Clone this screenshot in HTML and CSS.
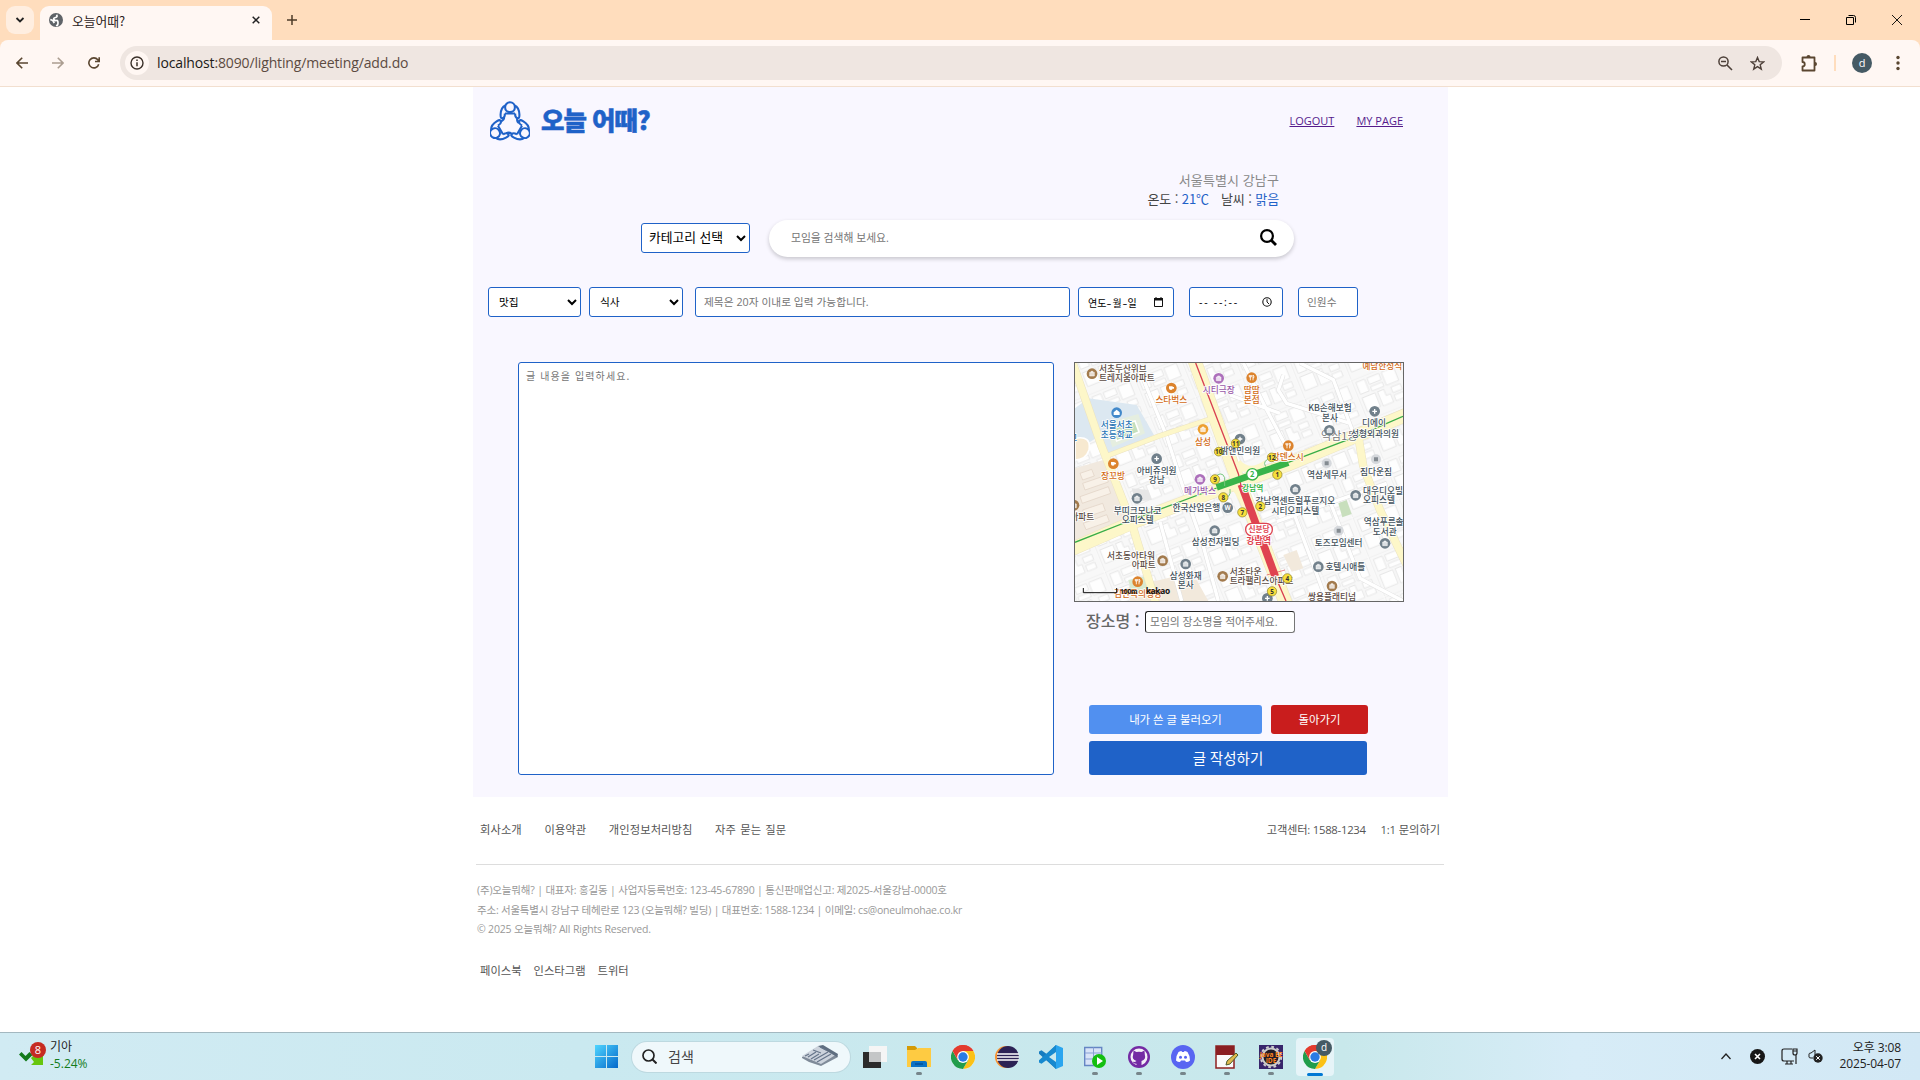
FILE: index.html
```html
<!DOCTYPE html>
<html lang="ko">
<head>
<meta charset="utf-8">
<title>오늘어때?</title>
<link rel="stylesheet" href="styles.css">
</head>
<body>
<svg class="defs" width="0" height="0">
  <defs>
    <symbol id="chrome" viewBox="0 0 24 24">
      <circle cx="12" cy="12" r="12" fill="#fff"/>
      <path d="M12 12 1.6 6A12 12 0 0 1 22.4 6H12z" fill="#e33b2e"/>
      <path d="M22.4 6A12 12 0 0 1 12 24l5.2-9L12 6z" fill="#fbc116"/>
      <path d="M1.6 6A12 12 0 0 0 12 24l5.2-9H6.8z" fill="#219d4b"/>
      <path d="M1.6 6A12 12 0 0 1 22.4 6H12L6.8 15z" fill="#e33b2e"/>
      <circle cx="12" cy="12" r="5.9" fill="#fff"/><circle cx="12" cy="12" r="4.7" fill="#2a7be4"/>
    </symbol>
  </defs>
</svg>

<header class="tabstrip">
  <span class="tab-search"><svg width="10" height="10" viewBox="0 0 10 10"><path d="M1.5 3 5 6.5 8.500 3" fill="none" stroke="#222" stroke-width="1.8"/></svg></span>
  <div class="tab">
    <svg width="14" height="14" viewBox="0 0 14 14"><circle cx="7" cy="7" r="7" fill="#5f6368"/><path d="M7.500 1.800Q9 4 6.500 4.500T5 6.500t2.500 1T9 10t-2 2.300M1.300 6.500l2.500 1 1.500 2.500" stroke="#fff" stroke-width="1.700" fill="none"/></svg>
    <span class="tab-title">오늘어때?</span>
    <svg class="tab-x" width="8" height="8" viewBox="0 0 8 8"><path d="M.7.7l6.600 6.600M7.300.7L.7 7.300" stroke="#222" stroke-width="1.500"/></svg>
  </div>
  <svg class="new-tab" width="10" height="10" viewBox="0 0 10 10"><path d="M5 0v10M0 5h10" stroke="#4e3b28" stroke-width="1.500"/></svg>
  <div class="window-buttons">
    <svg width="10" height="10" viewBox="0 0 10 10"><path d="M0 4.500h10" stroke="#000"/></svg>
    <svg width="10" height="10" viewBox="0 0 10 10"><path d="M.5 2.500h7v7h-7zM2.500.5h5q2 0 2 2v5" fill="none" stroke="#000"/></svg>
    <svg width="10" height="10" viewBox="0 0 10 10"><path d="M0 0l10 10M10 0L0 10" stroke="#000" stroke-width=".9"/></svg>
  </div>
</header>

<div class="toolbar-back">
<nav class="toolbar">
  <svg class="nav-icon" width="12" height="12" viewBox="0 0 12 12"><path d="M12 6H1M6.200.8 1 6l5.200 5.200" fill="none" stroke="#5a4630" stroke-width="1.600"/></svg>
  <svg class="nav-icon faded" width="12" height="12" viewBox="0 0 12 12"><path d="M0 6h11M5.800.8 11 6l-5.200 5.200" fill="none" stroke="#5a4630" stroke-width="1.600"/></svg>
  <svg class="nav-icon" width="12" height="12" viewBox="0 0 12 12"><path d="M10.700 7.200A5 5 0 1 1 9.800 2.800L11 4.200M11.200.3v4.200H7" fill="none" stroke="#5a4630" stroke-width="1.600"/></svg>
  <div class="address">
    <span class="site-info"><svg width="14" height="14" viewBox="0 0 14 14"><circle cx="7" cy="7" r="6" fill="none" stroke="#3a3029" stroke-width="1.400"/><path d="M7 6.200v4M7 3.500v1.500" stroke="#3a3029" stroke-width="1.500"/></svg></span>
    <span class="url"><b>localhost</b>:8090/lighting/meeting/add.do</span>
    <svg class="zoom-icon" width="15" height="15" viewBox="0 0 15 15"><path d="M9 9l5 5M3 5.500h5" stroke="#4d4039" stroke-width="1.600"/><circle cx="5.500" cy="5.500" r="4.600" fill="none" stroke="#4d4039" stroke-width="1.500"/></svg>
    <svg width="15" height="15" viewBox="0 0 15 15"><path d="M7.500 1.500l1.700 4.100 4.500.3-3.500 2.900 1.100 4.300-3.800-2.400-3.800 2.400 1.100-4.300L1.300 5.900l4.500-.3z" fill="none" stroke="#4d4039" stroke-width="1.400"/></svg>
  </div>
  <svg class="extensions" width="17" height="17" viewBox="0 0 17 17"><path d="M1.500 2.500h12v13h-12v-4c3 0 3-4.500 0-4.500z" fill="none" stroke="#5a4630" stroke-width="1.800" stroke-linejoin="round"/><path d="M5.500 2a2 2 0 0 1 4 0zM14 7v4a2 2 0 0 0 0-4z" fill="#5a4630"/></svg>
  <span class="toolbar-divider"></span>
  <span class="avatar">d</span>
  <svg class="kebab" width="4" height="16" viewBox="0 0 4 16"><g fill="#5a4630"><circle cx="2" cy="2.500" r="1.700"/><circle cx="2" cy="8" r="1.700"/><circle cx="2" cy="13.500" r="1.700"/></g></svg>
</nav>
</div>

<main class="viewport">
  <div class="container">
    <div class="site-header">
      <svg class="logo" width="40" height="40" viewBox="0 0 40 40" fill="none" stroke="#1f62c8" stroke-width="2.100" stroke-linejoin="round">
        <g id="person"><circle cx="20" cy="6.200" r="4.900"/><path d="M15.500 4.500C11.500 6 10.800 9 10.600 13.500c-.1 3.500.5 4 2.300 3.500 2-.4 2-2 2-4.500M24.500 4.500c4 1.500 4.700 4.500 4.900 9 .1 3.500-.5 4-2.300 3.500-2-.4-2-2-2-4.500M15 12.500h10M14 16c.5 2-1 3.500-3 4.500"/></g>
        <use href="#person" transform="rotate(120 20 23.500)"/>
        <use href="#person" transform="rotate(240 20 23.500)"/>
      </svg>
      <h1 class="brand">오늘 어때?</h1>
      <a class="top-link" href="#">LOGOUT</a>
      <a class="top-link" href="#">MY PAGE</a>
    </div>

    <div class="weather">
      <div class="region">서울특별시 강남구</div>
      <div class="now"><span>온도 : <em>21℃</em></span><span>날씨 : <em>맑음</em></span></div>
    </div>

    <div class="search-row">
      <select class="field category"><option>카테고리 선택</option></select>
      <div class="search-box">
        <input class="search-input" placeholder="모임을 검색해 보세요.">
        <svg width="17" height="17" viewBox="0 0 17 17"><circle cx="7" cy="7" r="5.900" fill="none" stroke="#000" stroke-width="2.200"/><path d="M11 11l5 5" stroke="#000" stroke-width="2.800"/></svg>
      </div>
    </div>

    <div class="form-row">
      <select class="field main-cat"><option>맛집</option></select>
      <select class="field sub-cat"><option>식사</option></select>
      <input class="field title-input" placeholder="제목은 20자 이내로 입력 가능합니다.">
      <div class="field date-input"><span>연도<i>-</i>월<i>-</i>일</span><svg width="9" height="10" viewBox="0 0 9 10"><path d="M.5 1.500h8v8h-8z" fill="none" stroke="#111"/><path d="M0 1h9v2.500H0zM1.500 0h1v1h-1zM6.500 0h1v1h-1z" fill="#111"/></svg></div>
      <div class="field time-input"><span>-- --:--</span><svg width="10" height="10" viewBox="0 0 10 10"><circle cx="5" cy="5" r="4.200" fill="none" stroke="#111" stroke-width="1.100"/><path d="M5 2.200V5l2 2" fill="none" stroke="#111"/></svg></div>
      <input class="field people-input" placeholder="인원수">
    </div>

    <div class="body-row">
      <textarea class="field content-input" placeholder="글 내용을 입력하세요."></textarea>
      <aside class="side">
        <div class="map">
          <svg width="328" height="238" viewBox="15 24 984 714" preserveAspectRatio="none">
            <defs>
              <pattern id="blocks" width="150" height="128" patternUnits="userSpaceOnUse" patternTransform="rotate(-22)">
                <path d="M0 0h150v128H0z" fill="#f8f8f8"/>
                <g fill="#fefefe" stroke="#e4e4e4" stroke-width="2.500"><path d="M14 14h28v38H14zM50 14h38v20H50zM96 14h40v42H96zM50 42h38v14H50zM14 64h42v44H14zM64 64h20v20h14v26H64zM106 66h30v18h-30zM106 92h30v18h-30z"/></g>
                <path d="M0 0h150M0 0v128" stroke="#e0e0e0" stroke-width="8"/><path d="M0 0h150M0 0v128" stroke="#fff" stroke-width="5"/>
              </pattern>
              <g id="dot-shop"><circle r="16"/><path d="M-7-4h14v11H-7zM-3-4v-3h6v3" fill="#fff" stroke="#fff" stroke-width="1.500" fill-opacity=".75"/></g>
              <g id="dot-food"><circle r="16"/><path d="M-4-8v16M-7-8v6h6v-6M4 8V-8q4 3 2 9H4" stroke="#fff" stroke-width="2.500" fill="none"/></g>
              <g id="dot-med"><circle r="16"/><path d="M0-7V7M-7 0H7" stroke="#fff" stroke-width="4"/></g>
              <g id="dot-cup"><circle r="16"/><path d="M-7-5H4v6q0 5-5 5-6 0-6-5zM4-3h4v5H4" fill="#fff"/></g>
            </defs>
            <path d="M15 24h984v714H15z" fill="url(#blocks)"/>
            <path d="M15 160 55 130l145 20 52 90-135 60-40-50-62 40z" fill="#dce8f1"/>
            <path d="M105 205l100-28 20 58-98 42z" fill="#e5eee0"/><path d="M125 218l70-20 12 33-67 27z" fill="#c4dfbd" stroke="#fff" stroke-width="5"/>
            <path d="M15 250q50-10 42 35-10 30-42 30z" fill="#f7e9d0" stroke="#fff" stroke-width="5"/>
            <path d="M15 340l85-25 72 185-157 60z" fill="#f1e9df"/><g stroke="#dfd0c2" stroke-width="2" fill="#f8f1e8"><path d="M30 355l35-12 8 20-35 12zM38 385l70-24 7 20-70 24zM30 425l85-30 7 20-85 30zM38 465l60-20 8 22-60 20zM40 505l70-26 8 20-70 25z"/></g>
            <path d="M165 700l145-35 70 10 35 63H180zM640 600l40-15 20 55-35 10z" fill="#f2e9dc"/>
            <path d="M175 675l65-15 20 40-75 15z" fill="#d8ead0"/>
            <path d="M805 445l25-10 15 42-28 10z" fill="#c8dfbd"/>
            <path d="M185 400l50 5 10 30-50 5z" fill="#e6e6e6"/>
            <g fill="none" stroke="#e0e0e0" stroke-width="13"><path d="M200 24l90 220 45 140 65 190 45 164M640 60l-15 45 25 40 190 60M480 120l150 55M270 500l65 238M520 24l70 140 90 170M690 24l100 50 60 160M620 500l70-25 260-90M670 470l100 268M780 440l90 230 129 68"/></g>
            <g fill="none" stroke="#fff" stroke-width="10"><path d="M200 24l90 220 45 140 65 190 45 164M640 60l-15 45 25 40 190 60M480 120l150 55M270 500l65 238M520 24l70 140 90 170M690 24l100 50 60 160M620 500l70-25 260-90M670 470l100 268M780 440l90 230 129 68"/></g>
            <g fill="none" stroke="#ebe3c2" stroke-width="2" stroke-linejoin="round">
              <g stroke-width="25"><path d="M8 24l87 250 90 230 75 250M865 245l15 90 50 130 80 165"/></g><path d="M102 306l163-62 155-52" stroke-width="16"/>
              <path d="M372 12l118 328 60 150 100 262M5 582l195-85 250-95 200-72 210-88 150-63" stroke-width="42"/>
            </g>
            <g fill="none" stroke="#fdf7c9" stroke-linejoin="round">
              <g stroke-width="22"><path d="M8 24l87 250 90 230 75 250M865 245l15 90 50 130 80 165"/></g><path d="M102 306l163-62 155-52" stroke-width="13"/>
              <path d="M372 12l118 328 60 150 100 262M5 582l195-85 250-95 200-72 210-88 150-63" stroke-width="39"/>
            </g>
            <path d="M510 315q30 35 75 0l-10 35h-90zM455 385q35 10 50 50l20-55z" fill="#fdf7c9"/>
            <path d="M15 562l185-73 240-90M655 322l205-78 139-60" fill="none" stroke="#38ad48" stroke-width="4"/>
            <path d="M377 24l128 332 8 35M612 655l36 83" fill="none" stroke="#d94051" stroke-width="4"/>
            <path d="M514 388l102 277" stroke="#df4350" stroke-width="23"/><path d="M440 397l100-35 115-39" fill="none" stroke="#38b44a" stroke-width="20"/>
            <path d="M427 373q28-30 37-5v25M455 427q30 5 25-25M605 310q-30 5-18 25" fill="none" stroke="#78c77f" stroke-width="3"/><path d="M590 660l55-15" stroke="#df4350" stroke-width="2"/>

            <g class="poi" text-anchor="middle">
              <text x="808" y="256" class="district">역삼1동</text>
              <g fill="#5b4b43" text-anchor="start"><text x="87" y="50">서초두산위브</text><text x="87" y="79">트레지움아파트</text><text x="479" y="659">서초타운</text><text x="479" y="687">트라팰리스아파트</text></g>
              <g fill="#5b4b43"><text x="183" y="611">서초동아타워</text><text x="221" y="638">아파트</text><text x="37" y="495">아파트</text><text x="786" y="735">쌍용플래티넘</text></g>
              <g fill="#d36b16"><text x="304" y="145">스타벅스</text><text x="545" y="115">땀땀</text><text x="545" y="143">본점</text><text x="399" y="269">삼성</text><text x="129" y="371">장꼬방</text><text x="653" y="315">강덴스시</text><text x="937" y="41">예남한정식</text><text x="204" y="725">김만득의행당</text></g>
              <g fill="#9859a8"><text x="446" y="115">시티극장</text><text x="390" y="418">메가박스</text></g>
              <g fill="#2775b5"><text x="140" y="220">서울서초</text><text x="140" y="249">초등학교</text><text x="10" y="257">고</text></g>
              <g fill="#42515b"><text x="780" y="167">KB손해보험</text><text x="780" y="198">본사</text><text x="912" y="213">디에이</text><text x="915" y="245">성형외과의원</text><text x="511" y="298">밝앤민의원</text><text x="260" y="357">아비쥬의원</text><text x="260" y="385">강남</text><text x="771" y="368">역삼세무서</text><text x="918" y="361">짐다운짐</text><text x="939" y="417">대우디오빌</text><text x="927" y="445">오피스텔</text><text x="676" y="447">강남역센트럴푸르지오</text><text x="676" y="476">시티오피스텔</text><text x="203" y="476">부띠크모나코</text><text x="203" y="503">오피스텔</text><text x="379" y="467">한국산업은행</text><text x="437" y="571">삼성전자빌딩</text><text x="347" y="671">삼성화재</text><text x="347" y="700">본사</text><text x="941" y="510">역삼푸른솔</text><text x="944" y="539">도서관</text><text x="806" y="574">토즈모임센터</text><text x="826" y="645">호텔시애틀</text></g>
            </g>
            <g fill="#a27a4d"><use href="#dot-shop" x="66" y="56"/><use href="#dot-shop" x="278" y="617"/><use href="#dot-shop" x="458" y="664"/><use href="#dot-shop" x="786" y="693"/><use href="#dot-shop" x="12" y="451"/></g>
            <g fill="#dc832d"><use href="#dot-cup" x="304" y="99"/><use href="#dot-food" x="545" y="68"/><use href="#dot-cup" x="130" y="326"/><use href="#dot-food" x="655" y="272"/><use href="#dot-food" x="203" y="680"/></g>
            <use href="#dot-shop" x="399" y="223" fill="#eda030"/>
            <g fill="#ad70bb"><use href="#dot-shop" x="446" y="70"/><use href="#dot-shop" x="390" y="373"/></g>
            <g fill="#4389ca"><circle cx="140" cy="173" r="16"/><path d="M131 180v-8l9-8 9 8v8z" fill="#fff"/></g>
            <g fill="#71808b"><use href="#dot-med" x="260" y="311"/><use href="#dot-med" x="914" y="169"/><use href="#dot-med" x="510" y="252"/><use href="#dot-shop" x="778" y="226"/><use href="#dot-shop" x="201" y="430"/><use href="#dot-shop" x="676" y="403"/><use href="#dot-shop" x="857" y="421"/><use href="#dot-shop" x="434" y="527"/><use href="#dot-shop" x="347" y="627"/><use href="#dot-shop" x="945" y="565"/><use href="#dot-shop" x="745" y="635"/><use href="#dot-med" x="592" y="730"/><circle cx="473" cy="458" r="16"/></g>
            <text x="473" y="465" class="mark">W</text>
            <g fill="#d5d8dc"><circle cx="770" cy="325" r="15"/><circle cx="918" cy="313" r="15"/><circle cx="806" cy="527" r="15"/></g><path d="M764 319h12v12h-12zM912 307h12v12h-12zM800 521h12v12h-12z" fill="#848b91"/>
            <g class="exit"><circle cx="497" cy="265" r="13"/><circle cx="446" cy="290" r="13"/><circle cx="605" cy="307" r="13"/><circle cx="622" cy="359" r="14"/><circle cx="435" cy="373" r="14"/><circle cx="460" cy="427" r="14"/><circle cx="571" cy="454" r="14"/><circle cx="517" cy="472" r="14"/><circle cx="652" cy="670" r="14"/><circle cx="606" cy="709" r="14"/></g>
            <g class="exit-no"><text x="497" y="272">11</text><text x="446" y="297">10</text><text x="605" y="314">12</text><text x="622" y="366">1</text><text x="435" y="380">9</text><text x="460" y="434">8</text><text x="571" y="461">2</text><text x="517" y="479">7</text><text x="652" y="677">4</text><text x="606" y="716">5</text></g>
            <circle cx="547" cy="358" r="17" fill="#fff" stroke="#38b44a" stroke-width="4"/><text x="547" y="367" class="station line2">2</text>
            <text x="548" y="407" class="station line2 halo">강남역</text>
            <rect x="527" y="505" width="80" height="37" rx="18" fill="#fff" stroke="#df4350" stroke-width="4"/><text x="567" y="532" class="station shin">신분당</text>
            <text x="566" y="568" class="station shin halo big">강남역</text>
            <path d="M40 699v14h100v-14" fill="none" stroke="#111" stroke-width="3"/><text x="150" y="717" class="scale">100m</text><text x="227" y="716" class="scale kakao">kakao</text>
          </svg>
        </div>
        <div class="place-row"><label class="place-label">장소명 :</label><input class="place-input" placeholder="모임의 장소명을 적어주세요."></div>
        <div class="actions">
          <button class="btn load">내가 쓴 글 불러오기</button><button class="btn back">돌아가기</button>
        </div>
        <button class="btn submit">글 작성하기</button>
      </aside>
    </div>
  </div>

  <footer class="footer">
    <div class="footer-top">
      <span>회사소개</span><span>이용약관</span><span>개인정보처리방침</span><span class="faq">자주 묻는 질문</span>
      <span class="support">고객센터: 1588-1234</span><span class="inquiry">1:1 문의하기</span>
    </div>
    <div class="company">
      <p class="c1">(주)오늘뭐해? | 대표자: 홍길동 | 사업자등록번호: 123-45-67890 | 통신판매업신고: 제2025-서울강남-0000호</p>
      <p class="c2">주소: 서울특별시 강남구 테헤란로 123 (오늘뭐해? 빌딩) | 대표번호: 1588-1234 | 이메일: cs@oneulmohae.co.kr</p>
      <p class="c3">© 2025 오늘뭐해? All Rights Reserved.</p>
    </div>
    <div class="social"><span>페이스북</span><span>인스타그램</span><span>트위터</span></div>
  </footer>
</main>

<div class="taskbar">
  <div class="widget">
    <svg width="27" height="26" viewBox="0 0 27 26"><path d="M0 12.500 2.500 10l4 4 4-4 3 3-6.500 6.500z" fill="#127a1b"/><path d="M12 16l3-3h9v10H12l3-3z" fill="#66c60e"/><circle cx="19" cy="8" r="8" fill="#c62b22"/><text x="19" y="12" class="badge">8</text></svg>
    <div class="stock"><span>기아</span><span class="down">-5.24%</span></div>
  </div>
  <div class="apps">
    <span class="app"><svg width="23" height="23" viewBox="0 0 23 23"><defs><linearGradient id="win" gradientUnits="userSpaceOnUse" x1="0" y1="0" x2="23" y2="23"><stop stop-color="#4fd5ff"/><stop offset="1" stop-color="#0468ca"/></linearGradient></defs><path d="M0 0h11v11H0zM12 0h11v11H12zM0 12h11v11H0zM12 12h11v11H12z" fill="url(#win)"/></svg></span>
    <div class="task-search">
      <svg width="15" height="15" viewBox="0 0 15 15"><circle cx="6.500" cy="6.500" r="5.500" fill="none" stroke="#222" stroke-width="1.700"/><path d="M10.500 10.500l4 4" stroke="#222" stroke-width="2"/></svg>
      <span>검색</span>
      <svg class="news" width="38" height="22" viewBox="0 0 38 22"><path d="M1 12 18 1l5 2 13 6 1 3-17 9-12-4-7-4z" fill="#7f8b99"/><path d="M1 11 17 1l19 8-16 10z" fill="#ccd3dc"/><path d="M17 1l5-1 15 9-1 3z" fill="#5f6e80"/><path d="M4 11l4-2M7 12l8-5M10 14l8-5M13 15l14-8M16 17l14-8M12 5l8 3M19 2l6 3" stroke="#66758a" stroke-width="1.200"/></svg>
    </div>
    <span class="app"><svg width="24" height="22" viewBox="0 0 24 22"><path d="M0 6h18v16H0z" fill="#2b2b2b"/><path d="M6 0h18v16H6z" fill="#f5f5f5"/><path d="M6 6h12v10H6z" fill="#c4c6c7"/></svg></span>
    <span class="app run"><svg width="24" height="22" viewBox="0 0 24 22"><path d="M0 0h8l2 2v6H0z" fill="#d59a05"/><path d="M0 4h8l3-2h13v19H0z" fill="#fecb42"/><path d="M4 21v-4q0-2 2-2h12q2 0 2 2v4z" fill="#0b72c4"/><path d="M8 18h8" stroke="#055199" stroke-width="1.500"/></svg></span>
    <span class="app"><svg width="24" height="24"><use href="#chrome"/></svg></span>
    <span class="app"><svg width="24" height="22" viewBox="0 0 24 22"><circle cx="11" cy="11" r="11" fill="#f79332"/><circle cx="13" cy="11" r="11" fill="#2c2255"/><path d="M2 8h22M2 11h22M2 14h22" stroke="#fff" stroke-width="1.700"/></svg></span>
    <span class="app"><svg width="24" height="24" viewBox="0 0 24 24"><path d="M17 0 8 9.300 2.500 5.200 0 6.500v2.200L17 24l1-6z" fill="#167cc0"/><path d="M17 24 8 14.700l-5.500 4.100L0 17.500v-2.200L17 0l1 6z" fill="#1789cf"/><path d="M17 0l7 3v18l-7 3z" fill="#2aa5ef"/><path d="M17 7v10l-7-5z" fill="#c9e8ed"/></svg></span>
    <span class="app run"><svg width="22" height="22" viewBox="0 0 22 22"><path d="M.7 1.500h17v18H.7z" fill="#d8e3f7" stroke="#6686c4" stroke-width="1.400"/><path d="M1 7h17M1 13h17M9.500 1.500v18" stroke="#87a1d5"/><circle cx="15" cy="15" r="7" fill="#13bf10"/><path d="M13 11l6 4-6 4z" fill="#fff"/></svg></span>
    <span class="app run"><svg width="22" height="22" viewBox="0 0 22 22"><circle cx="11" cy="11" r="11" fill="#742aa4"/><circle cx="11" cy="11" r="8.500" fill="#f4eff8"/><path d="M5.500 4.500 8.500 6q2.500-.7 5 0l3-1.500.3 4q1.500 5-3.300 6.500v5h-5v-2.300q-3 .3-4-2.200 2 1 4-.5-5-1.500-3.300-6.500z" fill="#742aa4"/></svg></span>
    <span class="app run"><svg width="24" height="24" viewBox="0 0 24 24"><circle cx="12" cy="12" r="12" fill="#5865f2"/><path d="M5 15.500q0-5 2.500-8.500 2-1 3-1l.5 1h2l.5-1q1 0 3 1 2.500 3.500 2.500 8.500-1.500 1.500-4 1.500l-1-1.500h-4L9 17q-2.500 0-4-1.500z" fill="#fff"/><circle cx="9.500" cy="12.300" r="1.500" fill="#5865f2"/><circle cx="14.500" cy="12.300" r="1.500" fill="#5865f2"/></svg></span>
    <span class="app run"><svg width="24" height="24" viewBox="0 0 24 24"><path d="M1 1h18v22H1z" fill="#fafafa" stroke="#8f2020" stroke-width="1.500"/><path d="M1 1h18v9H1z" fill="#8b1f22"/><path d="M11 20l1-4 9-8 2 2-8 9z" fill="#e0b94c" stroke="#4d5c2b"/></svg></span>
    <span class="app run"><svg width="24" height="24" viewBox="0 0 24 24"><path d="M0 0h24v24H0z" fill="#38256b"/><circle cx="12" cy="12" r="8.500" fill="#211b27" stroke="#ccc" stroke-width="2"/><circle cx="12" cy="12" r="10.200" fill="none" stroke="#ccc" stroke-width="2" stroke-dasharray="2.700 2.640"/><text x="12" y="11.500" class="java">Java EE</text><text x="12" y="18" class="java">IDE</text></svg></span>
    <span class="app run active"><svg width="24" height="24"><use href="#chrome"/></svg><i class="profile">d</i></span>
  </div>
  <div class="tray">
    <svg width="10" height="7" viewBox="0 0 10 7"><path d="M.5 6 5 1l4.500 5" fill="none" stroke="#222" stroke-width="1.300"/></svg>
    <svg class="t-x" width="15" height="15" viewBox="0 0 15 15"><circle cx="7.500" cy="7.500" r="7.500" fill="#171717"/><path d="M5 5l5 5M10 5l-5 5" stroke="#fff" stroke-width="1.600"/></svg>
    <svg class="t-pc" width="17" height="17" viewBox="0 0 17 17" fill="none" stroke="#222" stroke-width="1.200"><path d="M11 1H3Q1 1 1 3v8q0 2 2 2h10M4 16h8M6 13v3M10 13v3M15 7v9M12 1h4v4q0 2-2 2t-2-2zM12 3h4"/></svg>
    <svg class="t-vol" width="15" height="14" viewBox="0 0 15 14"><path d="M5 9H3Q1 9 1 8V5q0-1 2-1l4-3v5" fill="none" stroke="#222"/><circle cx="10" cy="9" r="4.700" fill="#222"/><path d="M8.200 7.200l3.600 3.600M11.800 7.200l-3.600 3.600" stroke="#fff"/></svg>
    <div class="clock"><span>오후 3:08</span><span>2025-04-07</span></div>
  </div>
</div>
</body>
</html>
```
FILE: styles.css
```css
* { box-sizing: border-box; }
body {
  margin: 0; width: 1920px; height: 1080px; overflow: hidden;
  display: flex; flex-direction: column; background: #fff;
  font-family: "Open Sans", "Noto Sans CJK KR", sans-serif;
}
svg { display: block; flex: none; }
.defs { position: absolute; }
input, select, textarea, button { font-family: inherit; margin: 0; }

/* browser frame */
.tabstrip { height: 40px; flex: none; display: flex; align-items: center; background: #ffddbd; padding-left: 6px; }
.tab-search { width: 28px; height: 28px; border-radius: 9px; background: #ffeee0; display: flex; align-items: center; justify-content: center; }
.tab { align-self: flex-end; margin-left: 6px; width: 232px; height: 34px; border-radius: 9px 9px 0 0; background: #fff7f3; display: flex; align-items: center; padding: 0 12px 6px 9px; }
.tab-title { margin: 2px 0 0 9px; font: 12.800px/18px "Noto Sans CJK KR", sans-serif; color: #2b211b; }
.tab-x { margin-left: auto; }
.new-tab { margin-left: 15px; }
.window-buttons { margin-left: auto; margin-right: 18px; display: flex; gap: 36px; }
.toolbar-back { background: #ffddbd; flex: none; }
.toolbar { height: 47px; background: #fff7f3; border-bottom: 1px solid #f2dfcf; border-radius: 8px 8px 0 0; display: flex; align-items: center; padding: 0 20px 0 16px; }
.nav-icon { margin-right: 24px; }
.faded { opacity: .5; }
.address { width: 1662px; height: 34px; margin-left: -4px; border-radius: 17px; background: #efe6e1; display: flex; align-items: center; padding: 0 17px 0 5px; }
.site-info { width: 24px; height: 24px; border-radius: 50%; background: #fff7f3; display: flex; align-items: center; justify-content: center; }
.url { margin-left: 8px; font-size: 14px; line-height: 20px; color: #5c4b42; letter-spacing: -.14px; }
.url b { font-weight: 400; color: #201a17; }
.zoom-icon { margin-left: auto; margin-right: 17px; }
.extensions { margin-left: 19px; }
.toolbar-divider { width: 2px; height: 16px; margin: 0 16px 0 16px; background: #ffddbd; }
.avatar { width: 20px; height: 20px; border-radius: 50%; background: #455a64; color: #fff; font-size: 11px; line-height: 19px; text-align: center; }
.kebab { margin-left: 24px; }

/* page */
.viewport { height: 945px; flex: none; }
.container { width: 975px; height: 710px; margin-left: 473px; background: #f9f7ff; }
.site-header { display: flex; align-items: center; height: 67px; padding: 0 45px 0 17px; }
.brand { margin: -4px auto 0 11px; font: 900 25.500px/30px "Noto Sans CJK KR", sans-serif; letter-spacing: -1px; color: #1f62c8; -webkit-text-stroke: .5px #1f62c8; }
.top-link { font-size: 11px; line-height: 16px; color: #551a8b; margin-left: 22px; }
.weather { display: flex; flex-direction: column; align-items: flex-end; padding: 16px 169px 0 0; font: 13px/19px "Noto Sans CJK KR", sans-serif; height: 66px; color: #444; }
.region { color: #888; letter-spacing: .1px; }
.now { display: flex; gap: 12px; letter-spacing: -.1px; }
.now em { font-style: normal; color: #1f62c8; }
.search-row { display: flex; align-items: center; height: 37px; padding-left: 168px; }
.field { border: 1px solid #1f62c8; border-radius: 3px; background: #fff; height: 30px; color: #000; outline: none; flex: none; }
.field::placeholder, .search-input::placeholder, .place-input::placeholder { color: #757575; opacity: 1; }
.category { width: 109px; font-size: 12.800px; padding: 0 3px 2px; margin-top: -1px; }
.search-box { width: 525px; height: 37px; margin-left: 19px; border-radius: 19px; background: #fff; box-shadow: 0 2px 4px rgba(0,0,0,.2); display: flex; align-items: center; padding: 0 17px 0 22px; }
.search-box svg { margin-top: -2px; }
.search-input { border: 0; padding: 0 0 2px; width: 470px; flex: 1; font-size: 10.800px; outline: none; background: none; }
.form-row { display: flex; padding: 30px 0 0 15px; }
.form-row .field { font-size: 10.700px; }
.form-row .main-cat { width: 93px; padding: 0 0 0 6px; }
.form-row .sub-cat { width: 94px; margin-left: 8px; padding: 0 0 0 6px; }
.title-input { width: 375px; margin-left: 12px; padding: 0 8px; letter-spacing: .04px; }
.date-input { width: 96px; margin-left: 8px; padding: 0 10px 0 9px; display: flex; align-items: center; justify-content: space-between; }
.date-input span { font-size: 10px; white-space: nowrap; }
.date-input i { display: inline-block; width: 6px; font-style: normal; transform: scaleX(1.500); text-align: center; }
.time-input { width: 94px; margin-left: 15px; padding: 0 10px 0 9px; display: flex; align-items: center; justify-content: space-between; }
.time-input span { letter-spacing: 1.700px; }
.people-input { width: 60px; margin-left: 15px; padding: 0 8px; }
.body-row { display: flex; padding: 45px 0 0 45px; }
.content-input { width: 536px; height: 413px; padding: 6px 7px; resize: none; font: 10px/14px "Noto Sans CJK KR", monospace; letter-spacing: 1.100px; }
.side { margin-left: 20px; width: 330px; }
.map { height: 240px; border: 1px solid #666; overflow: hidden; }
.poi text { font: 500 26px "Noto Sans CJK KR", sans-serif; stroke: #fff; stroke-width: 5px; paint-order: stroke; stroke-linejoin: round; }
.poi .district { font-size: 33px; font-weight: 400; fill: #777; }
.mark { font: 700 19px "Open Sans", sans-serif; fill: #fff; text-anchor: middle; }
.exit { fill: #f7df3c; stroke: #8a7d29; stroke-width: 2px; }
.exit-no { font: 700 19px "Open Sans", sans-serif; fill: #333; text-anchor: middle; }
.station { font: 700 23px "Noto Sans CJK KR", sans-serif; text-anchor: middle; }
.line2 { fill: #38b44a; }
.shin { fill: #df4350; }
.halo { stroke: #fff; stroke-width: 5px; paint-order: stroke; }
.big { font-size: 27px; }
.scale { font: 700 20px "Open Sans", sans-serif; fill: #111; letter-spacing: -.3px; }
.kakao { font-size: 25px; letter-spacing: -.8px; }
.place-row { display: flex; align-items: center; margin: 9px 0 0 11px; height: 22px; }
.place-label { width: 60px; font: 500 16px/22px "Noto Sans CJK KR", sans-serif; color: #666; margin-top: -5px; padding-left: 1px; white-space: nowrap; }
.place-input { width: 150px; height: 22px; border: 1px solid #767676; border-top-color: #222; border-left-color: #222; border-radius: 3px; background: #fff; padding: 0 4px 1px; font-size: 10.800px; }
.actions { display: flex; gap: 9px; margin: 72px 0 7px 15px; }
.btn { border: 0; border-radius: 3px; color: #fff; padding: 0 0 2px; }
.load { width: 173px; height: 29px; background: #5190f0; font-size: 11.400px; }
.back { width: 97px; height: 29px; background: #c91d1d; font-size: 11.400px; }
.submit { width: 278px; height: 34px; margin-left: 15px; background: #1f62c8; font-size: 14.500px; display: block; }

.footer { width: 968px; margin-left: 476px; font-size: 11.300px; color: #555; }
.footer-top { display: flex; align-items: center; gap: 22.600px; height: 68px; padding: 0 4px 3px; border-bottom: 1px solid #ddd; letter-spacing: .06px; }
.faq { word-spacing: 1.200px; }
.support { margin-left: auto; letter-spacing: -.25px; }
.inquiry { margin-left: -8px; letter-spacing: -.1px; }
.company { padding-top: 16px; font-size: 10.500px; color: #999; }
.company p { margin: 0; line-height: 19.600px; white-space: nowrap; width: max-content; letter-spacing: -.17px; padding-left: 1px; }
.company .c2 { letter-spacing: -.21px; }
.social { display: flex; gap: 12px; margin-top: 22px; padding-left: 4px; line-height: 18px; }

/* taskbar */
.taskbar { height: 48px; flex: none; display: flex; align-items: center; border-top: 1px solid #a3b8c0; background: linear-gradient(90deg, #d1ebf3 0, #cae9f0 30%, #c8e8eb 70%, #d7ecf7 82%, #d2e8f5 100%); }
.widget { width: 584px; height: 47px; display: flex; align-items: center; padding: 0 0 3px 19px; }
.badge { font: 11px "Open Sans", sans-serif; fill: #fff; text-anchor: middle; }
.stock { display: flex; flex-direction: column; margin-left: 4px; font-size: 12px; line-height: 17px; color: #222; }
.down { color: #147c1c; }
.apps { display: flex; align-items: center; }
.app { position: relative; width: 44px; height: 47px; display: flex; align-items: center; justify-content: center; }
.run::after { content: ""; position: absolute; left: 19px; bottom: 5px; width: 6px; height: 3px; border-radius: 2px; background: #77858a; }
.active { width: 38px; height: 38px; margin-left: 3px; border-radius: 4px; background: #e6f4f8; }
.active::after { left: 11px; bottom: 0; width: 16px; background: #0078d4; }
.profile { position: absolute; right: 2px; top: 2px; width: 16px; height: 16px; border-radius: 50%; background: #455a64; color: #fff; font: normal 10px/15px "Open Sans", sans-serif; text-align: center; }
.task-search { width: 218px; height: 30px; margin: 0 3px 0 4px; border-radius: 15px; background: #eff8fb; box-shadow: 0 0 0 1px #bdd9e0; display: flex; align-items: center; padding: 0 11px 1px 10px; font-size: 14px; color: #444; }
.task-search span { margin-left: 11px; }
.news { margin-left: auto; }
.java { font: 700 6.500px "Open Sans", sans-serif; fill: #ff861f; text-anchor: middle; }
.tray { margin-left: auto; display: flex; align-items: center; padding: 0 19px 1px 0; }
.t-x { margin-left: 19px; }
.t-pc { margin-left: 16px; }
.t-vol { margin-left: 10px; }
.clock { display: flex; flex-direction: column; align-items: flex-end; width: 78px; font-size: 12px; line-height: 16px; color: #222; letter-spacing: -.1px; }
```
